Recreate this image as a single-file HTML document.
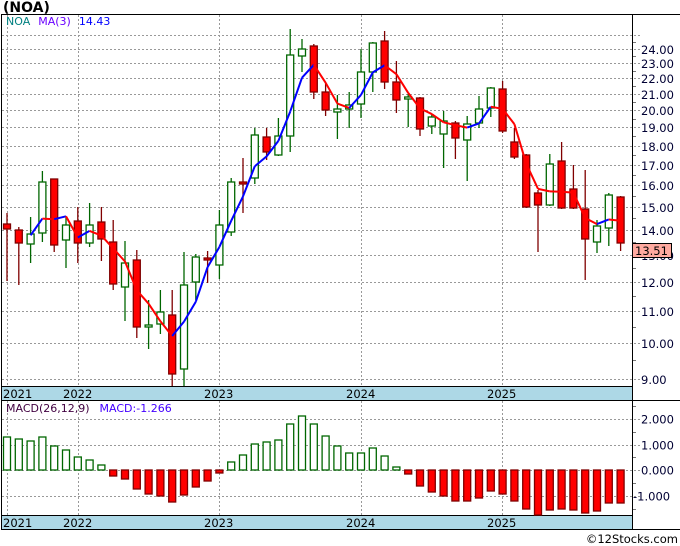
<!DOCTYPE html>
<html><head><meta charset="utf-8"><style>
body{margin:0;background:#fff;width:680px;height:546px;overflow:hidden}
svg{display:block;font-family:"DejaVu Sans","Liberation Sans",sans-serif}
</style></head><body>
<svg id="s" width="680" height="546" xmlns="http://www.w3.org/2000/svg"></svg>
<script>
var s=document.getElementById('s'),h='';
function P(y){return 24*Math.exp(-(y-49)/336);}
function Y(p){return 49+336*Math.log(24/p);}
var C=[[224,229,213,281,0],[230,243,227,285,0],[234,244,217,263,1],[182,233,171,242,1],[179,245,179,252,0],[225,240,217,268,1],[221,243,207,263,0],[225,243,203,247,1],[222,239,207,261,0],[242,284,220,290,0],[263,287,241,321,1],[260,327,250,338,0],[325,327,300,349,1],[312,324,290,334,1],[315,374,290,386,0],[285,369,252,386,1],[257,282,254,300,1],[258,260,251,283,0],[225,265,210,279,1],[182,232,178,236,1],[182,184,158,213,0],[135,178,128,184,1],[137,152,128,160,0],[136,155,118,156,1],[55,136,29,152,1],[49,56,39,72,1],[46,92,44,99,0],[92,110,82,116,0],[109,112,95,139,1],[105,109,92,128,1],[72,104,49,118,1],[43,72,42,92,1],[41,82,31,89,0],[82,100,61,113,0],[97,99,94,127,1],[98,129,97,136,0],[117,126,114,134,1],[121,134,111,168,1],[123,138,121,159,0],[124,140,116,181,1],[109,123,96,128,1],[88,108,87,117,1],[89,131,81,133,0],[142,157,128,159,0],[155,207,154,208,0],[193,205,190,252,0],[164,205,154,206,1],[161,208,142,209,0],[189,208,165,209,0],[209,239,170,280,0],[226,242,220,253,1],[195,228,193,246,1],[197,243,196,251,0]];
var M=[437,439,441,437,446,450,457,460,465,476,479,489,494,496,502,495,487,481,473,462,455,444,442,440,424,416,424,436,446,453,453,448,456,467,474,486,492,496,501,501,498,491,494,501,509,515,510,509,510,513,511,503,503];
function X(i){return 7+11.8*i;}
h+='<text x="3" y="12" font-size="14" font-weight="bold" fill="#000">(NOA)</text>';
h+='<line x1="1" y1="14.5" x2="680" y2="14.5" stroke="#000"/>';
h+='<line x1="1" y1="400.5" x2="680" y2="400.5" stroke="#000"/>';
h+='<line x1="1" y1="529.5" x2="680" y2="529.5" stroke="#000"/>';
h+='<line x1="1.5" y1="14" x2="1.5" y2="530" stroke="#000"/>';
h+='<rect x="2" y="387" width="630" height="13" fill="#add8e6"/><line x1="1" y1="386.5" x2="632" y2="386.5" stroke="#000"/>';
h+='<rect x="2" y="516" width="630" height="13" fill="#add8e6"/><line x1="1" y1="515.5" x2="632" y2="515.5" stroke="#000"/>';
var g='stroke="#999" stroke-dasharray="2,2"';
[7,78,219,361,502].forEach(function(x){h+='<line x1="'+x+'.5" y1="15" x2="'+x+'.5" y2="387" '+g+'/><line x1="'+x+'.5" y1="401" x2="'+x+'.5" y2="516" '+g+'/>';});
for(var p=9;p<=25;p++){var y=Math.round(Y(p))+.5;h+='<line x1="2" y1="'+y+'" x2="640" y2="'+y+'" '+g+'/>';if(p<=24)h+='<text x="641" y="'+(y+4.5)+'" font-size="11.5" fill="#000033">'+p.toFixed(2)+'</text>';
 var ym=Math.round(Y(p+0.5))+.5;if(p<25)h+='<line x1="632" y1="'+ym+'" x2="636" y2="'+ym+'" stroke="#777"/>';}
[[419,'2.000'],[445,'1.000'],[470,'0.000'],[496,'-1.000']].forEach(function(a){h+='<line x1="2" y1="'+(a[0]+.5)+'" x2="640" y2="'+(a[0]+.5)+'" '+g+'/><text x="'+(a[1][0]=='-'?633:641)+'" y="'+(a[0]+4.5)+'" font-size="11.5" fill="#000033">'+a[1]+'</text>';});
[406,432,457,483,509].forEach(function(y){h+='<line x1="632" y1="'+(y+.5)+'" x2="636" y2="'+(y+.5)+'" stroke="#777"/>';});
h+='<line x1="632.5" y1="14" x2="632.5" y2="530" stroke="#000"/>';
[[3,'2021'],[63,'2022'],[204,'2023'],[346,'2024'],[487,'2025']].forEach(function(a){h+='<text x="'+a[0]+'" y="398" font-size="11.5" fill="#000">'+a[1]+'</text><text x="'+a[0]+'" y="527" font-size="11.5" fill="#000">'+a[1]+'</text>';});
C.forEach(function(c,i){var x=X(i),col=c[4]?'#006600':'#800000';
 h+='<line x1="'+x+'" y1="'+c[2]+'" x2="'+x+'" y2="'+c[3]+'" stroke="'+col+'" stroke-width="1.3"/>';
 h+='<rect x="'+(x-3.5)+'" y="'+c[0]+'" width="7" height="'+Math.max(c[1]-c[0],1.5)+'" fill="'+(c[4]?'#fff':'#ff0000')+'" stroke="'+col+'" stroke-width="1.3"/>';});
var cl=C.map(function(c){return P(c[4]?c[0]:c[1]);}),ma=[];
for(var i=2;i<cl.length;i++)ma[i]=(cl[i]+cl[i-1]+cl[i-2])/3;
for(var i=3;i<cl.length;i++){h+='<line x1="'+X(i-1)+'" y1="'+Y(ma[i-1])+'" x2="'+X(i)+'" y2="'+Y(ma[i])+'" stroke="'+(ma[i]>=ma[i-1]?'#0000ff':'#ff0000')+'" stroke-width="2"/>';}
M.forEach(function(v,i){var x=X(i);if(v<470)h+='<rect x="'+(x-3.5)+'" y="'+v+'" width="7" height="'+(470-v)+'" fill="#fff" stroke="#006600" stroke-width="1.3"/>';
 else h+='<rect x="'+(x-3.5)+'" y="470" width="7" height="'+(v-470)+'" fill="#ff0000" stroke="#800000" stroke-width="1.3"/>';});
h+='<text x="6" y="25" font-size="11"><tspan fill="#008080">NOA</tspan><tspan dx="8" fill="#6a00ff">MA(3)</tspan><tspan dx="8" fill="#0000ff">14.43</tspan></text>';
h+='<text x="6" y="412" font-size="11"><tspan fill="#400040">MACD(26,12,9)</tspan><tspan dx="10" fill="#4400ff">MACD:-1.266</tspan></text>';
h+='<rect x="632.5" y="243.5" width="39" height="14" fill="#ffaaa0" stroke="#000"/><text x="635" y="255" font-size="11.5" fill="#000">13.51</text>';
h+='<text x="678" y="543" font-size="11.5" text-anchor="end" fill="#000">©12Stocks.com</text>';
s.innerHTML=h;
</script>
</body></html>
